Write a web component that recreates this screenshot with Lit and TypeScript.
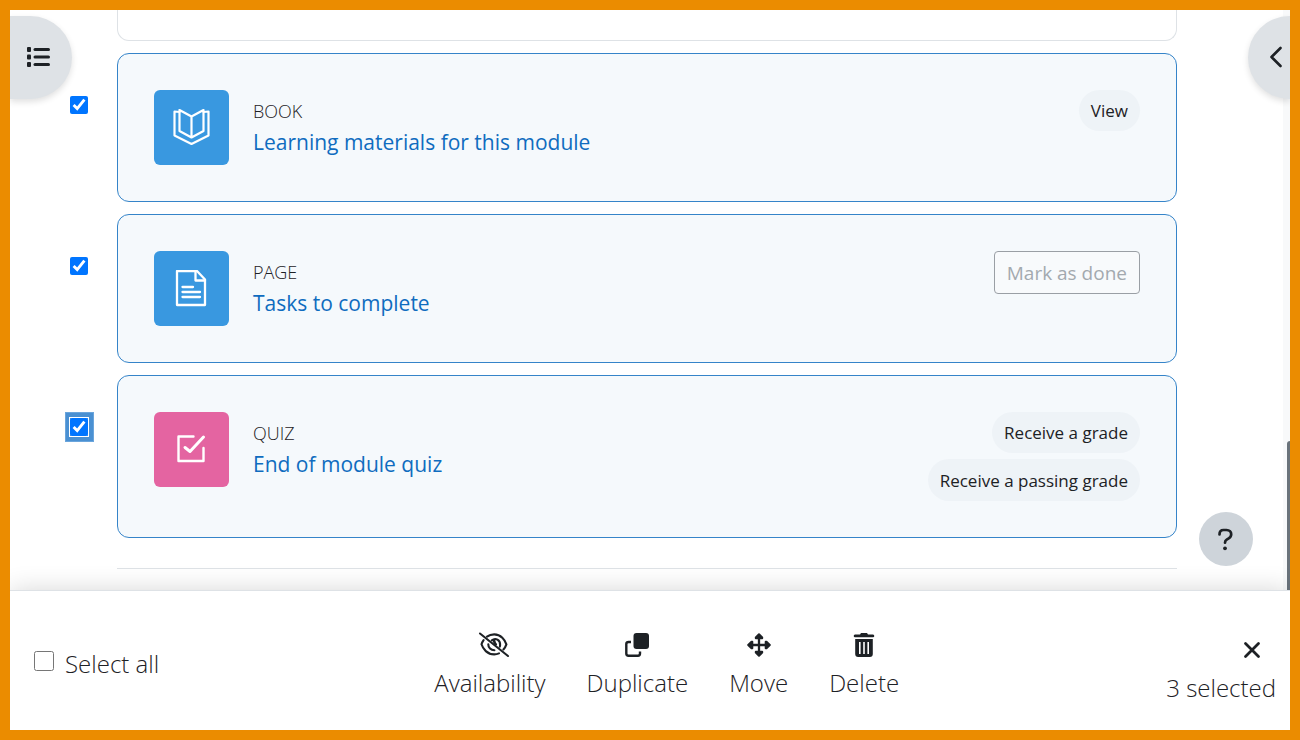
import { LitElement, html, svg, css } from "lit";
import { customElement, state } from "lit/decorators.js";
import { classMap } from "lit/directives/class-map.js";

type Activity = {
  id: string;
  kind: string;
  title: string;
  tone: "resource" | "assessment";
  badges: string[];
  manual?: boolean;
};

const ACTIVITIES: Activity[] = [
  { id: "book", kind: "BOOK", title: "Learning materials for this module", tone: "resource", badges: ["View"] },
  { id: "page", kind: "PAGE", title: "Tasks to complete", tone: "resource", badges: [], manual: true },
  { id: "quiz", kind: "QUIZ", title: "End of module quiz", tone: "assessment", badges: ["Receive a grade", "Receive a passing grade"] },
];

const GLYPHS: Record<string, unknown> = {
  book: svg`<g fill="none" stroke="currentColor" stroke-width="2.200" stroke-linejoin="round" stroke-linecap="round">
    <path d="M6.500 1 L18.500 7.500 L30.500 1 V22 L18.500 28.500 L6.500 22 Z M18.500 7.500 V28.500"/>
    <path d="M6.500 3 L1.500 2.500 V26.500 L18.500 35 L35.500 26.500 V2.500 L30.500 3"/></g>`,
  page: svg`<g fill="none" stroke="currentColor" stroke-width="2.300" stroke-linejoin="round" stroke-linecap="round">
    <path d="M4 1 H24 L32 9.500 V35 H4 Z"/><path d="M22.500 1 V10.500 H32"/>
    <path d="M9.500 17 H20 M9.500 22 H27 M9.500 27 H27"/></g>`,
  quiz: svg`<g fill="none" stroke="currentColor" stroke-width="2.400" stroke-linejoin="round" stroke-linecap="round">
    <path d="M20.500 5.500 H5.500 V30 H30.500 V17"/><path d="M12 16.500 L17 20.500 L30.500 6" stroke-width="3"/></g>`,
};

const icon = (kind: string, size: number, box: string, body: unknown) =>
  html`<svg class=${kind} width=${size} height=${size} viewBox=${box} aria-hidden="true">${body}</svg>`;

const LIST = svg`<g fill="currentColor"><rect x="1" y="1" width="4" height="5" rx="1"/><rect x="1" y="8.500" width="4" height="5" rx="1"/><rect x="1" y="16" width="4" height="5" rx="1"/>
  <rect x="7.500" y="2" width="16.500" height="3" rx="1.500"/><rect x="7.500" y="9.500" width="16.500" height="3" rx="1.500"/><rect x="7.500" y="17" width="16.500" height="3" rx="1.500"/></g>`;
const CHEVRON = svg`<path d="M16.500 2 L7.500 11 L16.500 20" fill="none" stroke="currentColor" stroke-width="2.600" stroke-linecap="round" stroke-linejoin="round"/>`;
const QUESTION = svg`<path d="M5.500 7.500 C5.500 4.500 7.300 3 9.500 3 H12.500 C15.500 3 17.200 5 17.200 7.300 C17.200 9.300 16.200 10.500 14.700 11.400 L12.700 12.600 C11.500 13.300 11 14 11 15.700" fill="none" stroke="currentColor" stroke-width="2.700" stroke-linecap="round"/><circle cx="11" cy="21.300" r="1.900" fill="currentColor"/>`;
const CLOSE = svg`<path d="M5.500 5.500 L18.500 18.500 M18.500 5.500 L5.500 18.500" stroke="currentColor" stroke-width="2.800" stroke-linecap="round"/>`;
const EYE_SLASH = svg`<g fill="none" stroke="currentColor" stroke-width="2.100" stroke-linecap="round">
  <path d="M2 4.500 L30 27"/>
  <path d="M9 7.700 C11 6.200 13.400 5.400 16.200 5.400 C23 5.400 27 11 28.400 15.300 C27.800 17.100 26.800 18.900 25.400 20.500"/>
  <path d="M5.600 11.200 C4.600 12.600 3.900 14 3.500 15.300 C5 20 9.200 25.400 16.200 25.400 C18 25.400 19.600 25 21 24.400"/>
  <path d="M13.800 11.300 C17.500 8.400 22.400 11 22.100 16 C22.100 16.700 22 17.200 21.800 17.700"/>
  <path d="M10.300 15.200 C10.200 18.700 12.900 21.200 16.400 21.200"/>
  <path d="M16 11.500 C16.500 13 16.200 13.800 17.800 15.400" stroke-width="2.600"/></g>`;
const DUPLICATE = svg`<rect x="8.500" y="0" width="15.500" height="16" rx="3" fill="currentColor"/>
  <path d="M6 9 H3.500 Q1.300 9 1.300 11 V20.500 Q1.300 22.700 3.500 22.700 H13 Q15 22.700 15 20.500 V18.500" fill="none" stroke="currentColor" stroke-width="2.400"/>`;
const MOVE = svg`<path d="M12 3 V21 M3 12 H21" stroke="currentColor" stroke-width="2.300"/>
  <g fill="currentColor" stroke="currentColor" stroke-width="2" stroke-linejoin="round"><path d="M12 1.200 L15.200 4.500 V5.300 H8.800 V4.500 Z M12 22.800 L8.800 19.500 V18.700 H15.200 V19.500 Z M1.200 12 L4.500 8.800 H5.300 V15.200 H4.500 Z M22.800 12 L19.500 15.200 H18.700 V8.800 H19.500 Z"/></g>`;
const TRASH = svg`<path fill="currentColor" fill-rule="evenodd" d="M9 0 H15 L16 1.500 H21 Q22.300 1.500 22.300 3 Q22.300 4.200 21 4.200 H3 Q1.700 4.200 1.700 3 Q1.700 1.500 3 1.500 H8 Z M3.200 6 H20.800 V21 Q20.800 24 17.800 24 H6.200 Q3.200 24 3.200 21 Z M7 9 V21 H8.600 V9 Z M11.200 9 V21 H12.800 V9 Z M15.400 9 V21 H17 V9 Z"/>`;

@customElement("activity-card")
export class ActivityCard extends LitElement {
  static properties = { activity: { attribute: false }, checked: { type: Boolean }, active: { type: Boolean } };
  declare activity: Activity;
  declare checked: boolean;
  declare active: boolean;

  static styles = css`
    :host { display: grid; grid-template-columns: 107px 1fr; }
    .pick { justify-self: end; align-self: start; display: flex; margin: 37px 23px 0 0; padding: 5px 5px 5px 4px; border: 1px solid transparent; }
    .pick.active { background: #4a90d2; border-color: #6aa5dc; }
    .pick input { width: 18px; height: 18px; margin: 0; accent-color: #0075ff; }
    .pick.active input { outline: 1px solid #fff; }
    .card { display: flex; align-items: flex-start; gap: 24px; padding: 36px; border: 1px solid #dee2e6; border-radius: 12px; background: #fff; }
    .card.selected { border-color: #3584c9; background: #f5f9fc; }
    .tile { flex: none; display: grid; place-items: center; width: 75px; height: 75px; border-radius: 6px; color: #fff; }
    .resource { background: #3998e0; }
    .assessment { background: #e464a1; }
    .text { flex: 1; padding-top: 8px; }
    .kind { font-size: 18px; line-height: 26px; font-weight: 300; color: #1d2125; }
    .title { display: block; font-size: 21px; line-height: 36px; color: #0f6cbf; text-decoration: none; }
    .badges { display: flex; flex-direction: column; align-items: flex-end; gap: 6px; }
    .badge { padding: 1px 12px 0; border-radius: 21px; background: #eef3f7; font-size: 17px; line-height: 40px; color: #1d2125; }
    .badge:nth-child(2) { line-height: 41px; }
    .done { padding: 1px 12px 0; border: 1px solid #9a9fa5; border-radius: 4px; background: #f8fafc; font: inherit; font-size: 19px; line-height: 40px; color: #a3a9af; }
  `;

  render() {
    const a = this.activity;
    return html`
      <label class=${classMap({ pick: true, active: this.active })}>
        <input type="checkbox" aria-label="Select ${a.title}" .checked=${this.checked}
          @change=${(e: Event) => this.dispatchEvent(new CustomEvent("pick", { detail: (e.target as HTMLInputElement).checked }))} />
      </label>
      <article class=${classMap({ card: true, selected: this.checked })}>
        <span class="tile ${a.tone}">${icon("glyph", 38, "0 0 38 38", GLYPHS[a.id])}</span>
        <div class="text">
          <div class="kind">${a.kind}</div>
          <a class="title" href="#${a.id}">${a.title}</a>
        </div>
        <div class="badges">
          ${a.badges.map((b) => html`<span class="badge">${b}</span>`)}
          ${a.manual ? html`<button class="done" disabled>Mark as done</button>` : ""}
        </div>
      </article>`;
  }
}

@customElement("app-root")
export class AppRoot extends LitElement {
  @state() private picked = new Set(ACTIVITIES.map((a) => a.id));
  @state() private current = "quiz";

  static styles = css`
    :host { box-sizing: border-box; display: flex; flex-direction: column; height: 100vh; overflow: hidden; border: 10px solid #eb8c00; background: #fff; color: #1d2125; font-family: "Segoe UI", "Open Sans", "Noto Sans", sans-serif; }
    * { box-sizing: border-box; }
    button { font: inherit; color: inherit; border: 0; background: none; padding: 0; cursor: pointer; }
    .main { position: relative; flex: 1; min-height: 0; overflow: hidden; }
    .list { display: flex; flex-direction: column; gap: 12px; padding-right: 113px; }
    .previous { height: 31px; margin-left: 107px; border: 1px solid #dee2e6; border-top: 0; border-radius: 0 0 12px 12px; }
    .end { margin: 18px 0 0 107px; border: 0; border-top: 1px solid #dee2e6; }
    .track { position: absolute; top: 0; right: 0; bottom: 0; width: 7px; background: #f8f9fa; }
    .thumb { position: absolute; right: 0; bottom: 0; width: 3px; height: 149px; border-radius: 3px 0 0 0; background: #6a737b; }
    .drawer { position: absolute; top: 6px; display: flex; align-items: center; height: 83px; background: #dee2e6; box-shadow: 0 3px 6px rgba(0, 0, 0, 0.12); }
    .index { left: 0; width: 62px; padding-left: 16px; border-radius: 0 42px 42px 0; }
    .blocks { right: 0; width: 42px; padding-left: 16px; border-radius: 42px 0 0 42px; }
    .help { position: absolute; right: 37px; bottom: 24px; display: grid; place-items: center; width: 54px; height: 54px; border-radius: 50%; background: #ced4da; }
    .bar { position: relative; display: flex; align-items: center; justify-content: space-between; height: 140px; padding: 6px 14px 0 24px; border-top: 1px solid #dee2e6; background: #fff; box-shadow: 0 0 24px rgba(0, 0, 0, 0.16); font-size: 24px; font-weight: 300; line-height: 38px; }
    .all { display: flex; align-items: center; gap: 11px; }
    .all input { width: 20px; height: 20px; margin: 0 0 6px; }
    .actions { display: flex; gap: 41px; padding-left: 8px; }
    .action, .status { display: flex; flex-direction: column; align-items: center; }
    .action svg { height: 38px; }
    .status { align-items: flex-end; padding-top: 10px; }
    .close { display: flex; padding: 7px 12px; }
  `;

  private pick(id: string, on: boolean) {
    const next = new Set(this.picked);
    on ? next.add(id) : next.delete(id);
    this.picked = next;
    this.current = id;
  }

  private action(label: string, size: number, box: string, body: unknown) {
    return html`<button class="action">${icon("glyph", size, box, body)}<span>${label}</span></button>`;
  }

  render() {
    return html`
      <main class="main">
        <div class="list">
          <div class="previous"></div>
          ${ACTIVITIES.map((a) => html`<activity-card .activity=${a} .checked=${this.picked.has(a.id)} .active=${this.current === a.id}
            @pick=${(e: CustomEvent) => this.pick(a.id, e.detail)}></activity-card>`)}
          <hr class="end" />
        </div>
        <div class="track"></div>
        <div class="thumb"></div>
        <button class="drawer index" aria-label="Open course index">${icon("glyph", 24, "0 0 24 24", LIST)}</button>
        <button class="drawer blocks" aria-label="Open block drawer">${icon("glyph", 24, "0 0 24 24", CHEVRON)}</button>
        <button class="help" aria-label="Help">${icon("glyph", 24, "0 0 24 24", QUESTION)}</button>
      </main>
      <footer class="bar">
        <label class="all"><input type="checkbox" /><span>Select all</span></label>
        <div class="actions">
          ${this.action("Availability", 40, "-8 0 40 32", EYE_SLASH)}
          ${this.action("Duplicate", 24, "0 0 24 24", DUPLICATE)}
          ${this.action("Move", 24, "0 0 24 24", MOVE)}
          ${this.action("Delete", 24, "0 0 24 24", TRASH)}
        </div>
        <div class="status">
          <button class="close" aria-label="Close">${icon("glyph", 24, "0 0 24 24", CLOSE)}</button>
          <span>${this.picked.size} selected</span>
        </div>
      </footer>`;
  }
}
